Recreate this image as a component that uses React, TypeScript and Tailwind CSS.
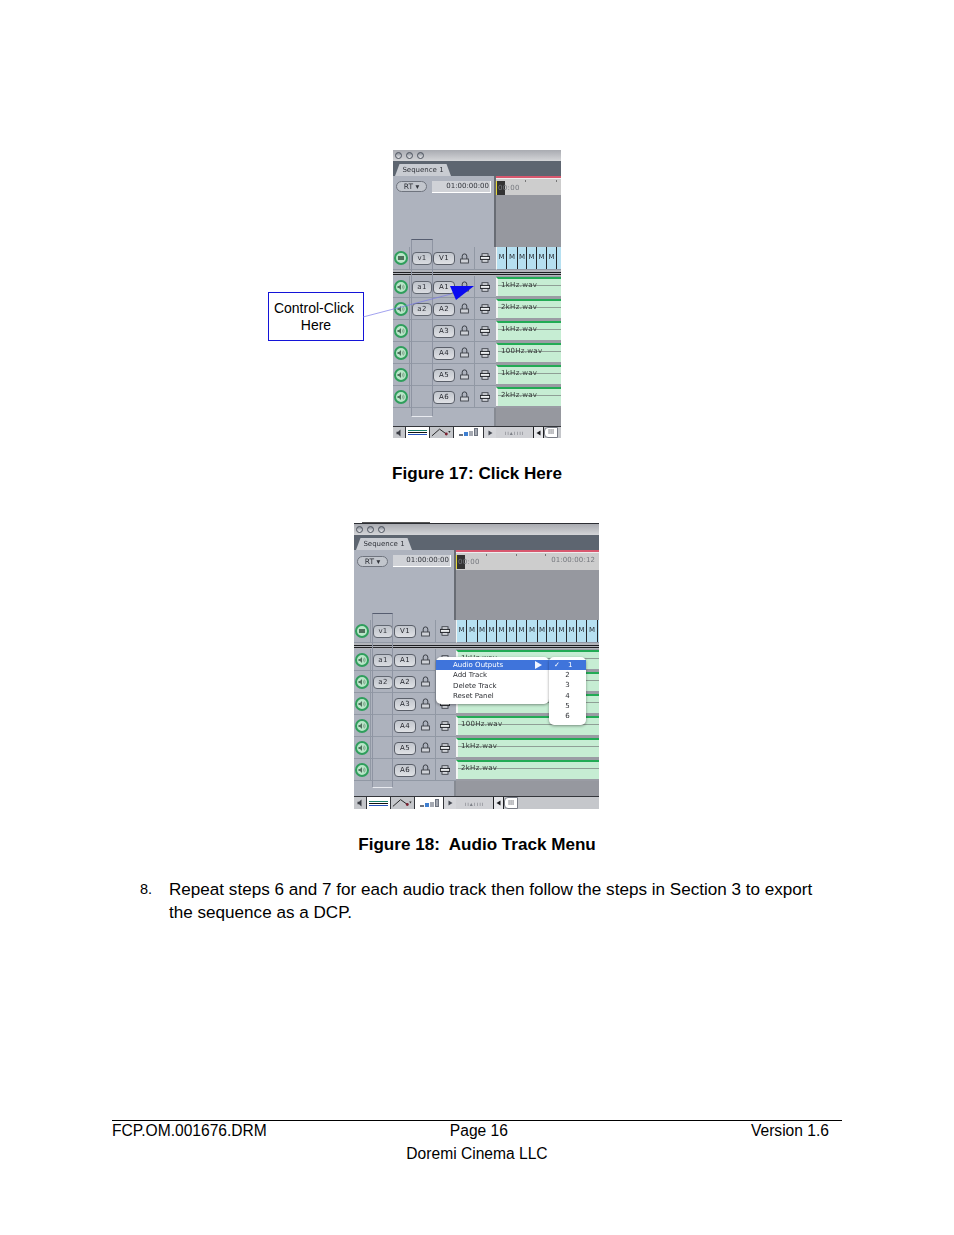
import React from 'react';

const audioTracks = [
  { dest: 'a1', src: 'A1', clip: '1kHz.wav' },
  { dest: 'a2', src: 'A2', clip: '2kHz.wav' },
  { dest: '', src: 'A3', clip: '1kHz.wav' },
  { dest: '', src: 'A4', clip: '100Hz.wav' },
  { dest: '', src: 'A5', clip: '1kHz.wav' },
  { dest: '', src: 'A6', clip: '2kHz.wav' },
];

const cellWidths = [10, 11, 9, 10, 10, 10];

const Dot = () => (
  <span className="w-[7px] h-[7px] rounded-full border border-[#4c525d] bg-gradient-to-b from-[#8d929b] to-[#e8e9ec]" />
);

const SpeakerBadge = ({ video }: { video?: boolean }) => (
  <span className="w-[14px] h-[14px] rounded-full bg-[#b9e6c8] border-2 border-[#2f9e5c] flex items-center justify-center">
    <svg width="8" height="8" viewBox="0 0 8 8">
      {video ? (
        <rect x="1" y="2" width="6" height="4" fill="#4f6f5c" />
      ) : (
        <>
          <path d="M0.5 3h1.5l2-2v6l-2-2H0.5z" fill="#4f6f5c" />
          <path d="M5.3 2.5q1 1.5 0 3M6.4 1.6q1.6 2.4 0 4.8" stroke="#6f8c7a" strokeWidth="0.7" fill="none" />
        </>
      )}
    </svg>
  </span>
);

const LockIcon = () => (
  <svg width="9" height="11" viewBox="0 0 9 11">
    <path d="M2.2 6V3.2a2.3 2.3 0 0 1 4.6 0V6" stroke="#3c4048" strokeWidth="1" fill="none" />
    <rect x="0.6" y="6" width="7.8" height="4" fill="#cfd2d8" stroke="#3c4048" strokeWidth="0.9" />
  </svg>
);

const SyncIcon = () => (
  <svg width="10" height="10" viewBox="0 0 10 10">
    <rect x="2" y="0.7" width="6" height="8.6" fill="#d5d8dd" stroke="#3c4048" strokeWidth="0.9" />
    <rect x="0.3" y="3.4" width="9.4" height="3" fill="#eceef0" stroke="#1f2126" strokeWidth="1" />
  </svg>
);

const Pill = ({ label, wide }: { label: string; wide?: boolean }) => (
  <span
    className={`h-[13px] ${wide ? 'w-[22px]' : 'w-[20px]'} rounded-[4px] border border-[#5a5f69] bg-gradient-to-b from-[#c2c6cd] to-[#dfe1e5] flex items-center justify-center text-[7px] tracking-[0.3px] text-[#1f2128]`}
  >
    {label}
  </span>
);

const HeaderCells = ({ dest, src, video, tight }: { dest: string; src: string; video?: boolean; tight?: boolean }) => (
  <div className="h-full flex border-b border-[#9198a4] bg-[#aeb3be]">
    <div className="w-[17px] shrink-0 border-r border-[#9198a4] flex items-center justify-center">
      <SpeakerBadge video={video} />
    </div>
    <div className="flex-1 flex items-center pl-[2px] pt-[1px] gap-[1px]">
      {dest ? <Pill label={dest} /> : <span className="w-[20px]" />}
      <Pill label={src} wide />
    </div>
    <div className="w-[20px] shrink-0 border-r border-[#9198a4] flex items-center justify-center">
      <LockIcon />
    </div>
    <div className={`w-[22px] shrink-0 ${tight ? 'pr-[4px]' : 'pr-[2px]'} flex items-center justify-center`}>
      <SyncIcon />
    </div>
  </div>
);

const ClipCell = ({ name }: { name?: string }) => (
  <div className="h-full bg-[#9a9ca4] pt-[1px] pb-[2px]">
    <div className="relative h-full bg-[#c6edd3] border-t-2 border-[#22ab55] border-l-2 border-l-[#f2f5f3] pl-[3px] pt-[1px] text-[7px] leading-[11px] text-[#2f3533] tracking-[0.3px] overflow-hidden">
      <div className="absolute left-0 right-0 top-[6px] h-px bg-[#8f9f96]" />
      <span className="relative">{name}</span>
    </div>
  </div>
);

const Panel = ({
  width,
  height,
  titleH,
  tabH,
  ctrlH,
  midH,
  restH,
  headerW,
  cells,
  long,
  ticks,
  hideClips,
  children,
}: {
  width: number;
  height: number;
  titleH: number;
  tabH: number;
  ctrlH: number;
  midH: number;
  restH: number;
  headerW: number;
  cells: number;
  long?: boolean;
  ticks: number[];
  hideClips?: string[];
  children?: React.ReactNode;
}) => (
  <div
    className="relative flex flex-col overflow-hidden bg-[#aeb3be] font-['DejaVu_Sans',sans-serif] blur-[0.3px]"
    style={{ width, height }}
  >
    <div className={`shrink-0 flex items-center gap-[4px] pl-[2px] bg-gradient-to-b from-[#a9abb1] to-[#d4d5d8] ${long ? 'border-t border-[#2c2e33]' : ''}`} style={{ height: titleH }}>
      <Dot />
      <Dot />
      <Dot />
    </div>
    <div className="shrink-0 flex items-end bg-[#5d6570] pl-[2px]" style={{ height: tabH }}>
      <div className="h-[12px] w-[56px] bg-[#c9ccd2] [clip-path:polygon(8%_0,92%_0,100%_100%,0_100%)] text-[7px] leading-[12px] text-center text-[#30333a]">
        Sequence 1
      </div>
    </div>
    <div className="shrink-0 flex" style={{ height: ctrlH + midH }}>
      <div className="shrink-0 border-r-2 border-[#686c74]" style={{ width: headerW }}>
        <div className="flex items-center gap-[5px] pl-[3px] pt-[2px]" style={{ height: ctrlH }}>
          <span className="h-[11px] w-[31px] rounded-full border border-[#6f747e] bg-[#c2c6cd] text-[7.5px] leading-[9px] text-center text-[#30333a]">RT ▾</span>
          <span className="h-[12px] flex-1 mr-[3px] bg-[#d0d2d7] border-b border-r border-white text-[7px] leading-[11px] text-right pr-[1px] text-[#30333a]">01:00:00:00</span>
        </div>
      </div>
      <div className="flex-1 min-w-0 flex flex-col bg-[#96989f]">
        <div className="relative shrink-0 bg-[#cdcdcd] border-t-2 border-[#d8586f] flex justify-between pr-[4px] text-[7px] leading-[11px] text-[#75787e]" style={{ height: ctrlH }}>
          <div className="absolute left-0 right-0 top-0 h-px bg-[#eeeeee]" />
          {ticks.map(t => (
            <span key={t} className="absolute top-[2px] w-px h-[2px] bg-[#777777]" style={{ left: t }} />
          ))}
          <span className="mt-[3px] h-[14px] bg-gradient-to-r from-[#333333] to-[#333333] bg-[length:8px_100%] bg-no-repeat border-l border-[#e6d93b] pt-[2px] pl-[1px] tracking-[0.3px]">00:00</span>
          {long && <span className="pt-[3px] tracking-[0.1px]">01:00:00:12</span>}
        </div>
      </div>
    </div>
    <div className="shrink-0 flex h-[23px]">
      <div className="shrink-0" style={{ width: headerW }}>
        <HeaderCells dest="v1" src="V1" video tight={long} />
      </div>
      <div className="flex-1 min-w-0 flex overflow-hidden border-b border-[#9198a4] bg-[#b6e0f1] border-l border-l-[#f2f5f3]">
        {Array.from({ length: cells }).map((_, i) => (
          <span
            key={i}
            className="shrink-0 border-r border-[#24272b] text-[7px] leading-[20px] text-center text-[#2a2e34]"
            style={{ width: cellWidths[i % cellWidths.length] }}
          >
            M
          </span>
        ))}
      </div>
    </div>
    <div className="shrink-0 h-[6px] bg-[#b3b5bb] flex flex-col justify-center gap-[1px]">
      <div className="h-px bg-[#1d1e21]" />
      <div className="h-px bg-[#1d1e21]" />
    </div>
    {audioTracks.map(t => (
      <div key={t.src} className="shrink-0 flex h-[22px]">
        <div className="shrink-0" style={{ width: headerW }}>
          <HeaderCells dest={t.dest} src={t.src} tight={long} />
        </div>
        <div className="flex-1 min-w-0">
          <ClipCell name={hideClips?.includes(t.src) ? undefined : t.clip} />
        </div>
      </div>
    ))}
    <div className="shrink-0 flex" style={{ height: restH }}>
      <div className="shrink-0 border-r-2 border-[#868a92]" style={{ width: headerW }} />
      <div className="flex-1 bg-[#96989f]" />
    </div>
    <div className="flex-1 flex items-stretch bg-[#c5c7cb] border-t border-[#33353a]">
      <div className="shrink-0 flex items-center" style={{ width: headerW }}>
        <span className="w-[13px] text-center border-r border-[#33353a] h-full flex items-center justify-center">
          <svg width="7" height="8" viewBox="0 0 7 8"><path d="M0.5 2.7h1.6l2.4-2.2v7L2.1 5.3H0.5z" fill="#3a3d44" /></svg>
        </span>
        <span className="w-[24px] h-full bg-white border-r border-[#33353a] flex flex-col justify-center gap-[1px] px-[2px]">
          <span className="h-px bg-[#18806a]" />
          <span className="h-px bg-[#111111]" />
          <span className="h-px bg-[#2250b8]" />
        </span>
        <svg className="w-[24px] h-full border-r border-[#33353a]" viewBox="0 0 24 11">
          <path d="M2 9L10 2L17 7" stroke="#222222" strokeWidth="1" fill="none" />
          <circle cx="17" cy="7" r="1.5" fill="#7a2030" />
          <path d="M19 4l2.5 0l-1.2 2z" fill="#333333" />
        </svg>
        <span className="flex-1 h-full bg-white flex items-end justify-center gap-[1px] pb-[2px]">
          <span className="w-[4px] h-[2px] bg-[#6e7480]" />
          <span className="w-[4px] h-[4px] bg-[#3f7fd0]" />
          <span className="w-[4px] h-[5px] bg-[#a5a9b2]" />
          <span className="w-[4px] h-[8px] bg-[#a5a9b2] border border-[#6e7480]" />
        </span>
        <span className="w-[13px] h-full border-l border-[#33353a] bg-[#d5d6da] flex items-center justify-center">
          <svg width="5" height="6" viewBox="0 0 5 6"><path d="M0.5 0.5L4.5 3L0.5 5.5z" fill="#444851" /></svg>
        </span>
      </div>
      <div className="flex-1 min-w-0 flex items-center">
        <span className="w-[38px] h-full shrink-0 bg-[#d0d1d5] border-r border-[#1d1e21] flex items-center justify-center text-[6px] tracking-[1px] text-[#7c7f86]">
          ıı▴ıııı
        </span>
        <span className="w-[10px] h-full shrink-0 border-r border-[#1d1e21] bg-[#e6e7ea] flex items-center justify-center">
          <svg width="5" height="6" viewBox="0 0 5 6"><path d="M4.5 0.5L0.5 3L4.5 5.5z" fill="#16171a" /></svg>
        </span>
        <span className="w-[14px] h-full shrink-0 bg-white rounded-l-[4px] border border-[#777b84] flex items-center justify-center text-[7px] leading-none text-[#555861]">
          III
        </span>
      </div>
    </div>
    {children}
  </div>
);

const Caption = ({ children }: { children: React.ReactNode }) => (
  <p className="font-bold text-[17.08px] leading-[23px] text-center text-black whitespace-pre">{children}</p>
);

export default function App() {
  return (
    <div className="w-[954px] h-[1235px] bg-white font-['Liberation_Sans',Arial,sans-serif] text-black flex flex-col items-center pt-[150px] overflow-hidden">
      <div className="relative">
        <Panel width={168} height={288} titleH={11} tabH={15} ctrlH={19} midH={52} restH={18} headerW={103} cells={6} ticks={[29, 60]}>
          <div className="absolute left-[18px] top-[89px] w-[22px] h-[178px] border border-[#8e94a2] border-t-[#565d70] border-b-[#e8eaef] bg-[#a9aeb9]/10" />
        </Panel>
        <div className="absolute left-[-125px] top-[142px] w-[96px] h-[49px] border border-[#1414d8] bg-white text-[14px] leading-[17px] text-center pt-[7px]">
          <div className="pr-[4px]">Control-Click</div>
          <div>Here</div>
        </div>
        <svg className="absolute left-[-30px] top-[130px]" width="115" height="40" viewBox="0 0 115 40">
          <path d="M0 37L88 14" stroke="#7a7ae8" strokeWidth="0.7" fill="none" />
          <path d="M87 6L111 6L93 20z" fill="#0b0bf0" />
        </svg>
      </div>
      <div className="mt-[24px]">
        <Caption>Figure 17: Click Here</Caption>
      </div>
      <div className="relative mt-[38px] -ml-[1px]">
        <div className="absolute left-[8px] -top-[1px] w-[68px] h-px bg-[#555555]" />
        <Panel width={245} height={286} titleH={12} tabH={15} ctrlH={20} midH={50} restH={15} headerW={102} cells={14} long ticks={[30, 60, 89]} hideClips={['A2']}>
          <div className="absolute left-[18px] top-[90px] w-[21px] h-[175px] border border-[#8e94a2] border-t-[#565d70] border-b-[#e8eaef] bg-[#a9aeb9]/10" />
          <div className="absolute left-[82px] top-[134px] w-[113px] h-[47px] pt-[3px] bg-white rounded-[5px] shadow-[0_1px_3px_rgba(0,0,0,0.4)] text-[7px] leading-[10.3px] text-[#2e3035] pl-[17px]">
            <div className="absolute left-0 right-0 top-[3px] h-[10px] bg-[#3f74db]" />
            <div className="relative text-white flex justify-between pr-[6px]">
              Audio Outputs
              <svg width="9" height="10" viewBox="0 0 9 10"><path d="M1 1L8 5L1 9z" fill="#f2f5ff" /></svg>
            </div>
            <div>Add Track</div>
            <div>Delete Track</div>
            <div>Reset Panel</div>
          </div>
          <div className="absolute left-[195px] top-[134px] w-[37px] h-[68px] pt-[3px] bg-white rounded-[5px] shadow-[0_1px_3px_rgba(0,0,0,0.4)] text-[7px] leading-[10.3px] text-[#2e3035] text-center">
            <div className="h-[10px] bg-[#3f74db] text-white flex gap-[8px] pl-[5px]">
              <span>✓</span>
              <span>1</span>
            </div>
            {[2, 3, 4, 5, 6].map(n => (
              <div key={n}>{n}</div>
            ))}
          </div>
        </Panel>
      </div>
      <div className="mt-[24px]">
        <Caption>{'Figure 18:  Audio Track Menu'}</Caption>
      </div>
      <div className="w-[954px] mt-[22px] pl-[140px] pr-[130px] flex text-[17.1px] leading-[23px]">
        <span className="w-[29px] shrink-0 text-[14.5px]">8.</span>
        <p>Repeat steps 6 and 7 for each audio track then follow the steps in Section 3 to export the sequence as a DCP.</p>
      </div>
      <div className="mt-auto mb-[70px] w-[730px] border-t border-black text-[15.6px]">
        <div className="flex justify-between pr-[13px] leading-[19px]">
          <span>FCP.OM.001676.DRM</span>
          <span className="pr-[60px]">Page 16</span>
          <span>Version 1.6</span>
        </div>
        <div className="text-center mt-[2px] leading-[23px]">Doremi Cinema LLC</div>
      </div>
    </div>
  );
}
